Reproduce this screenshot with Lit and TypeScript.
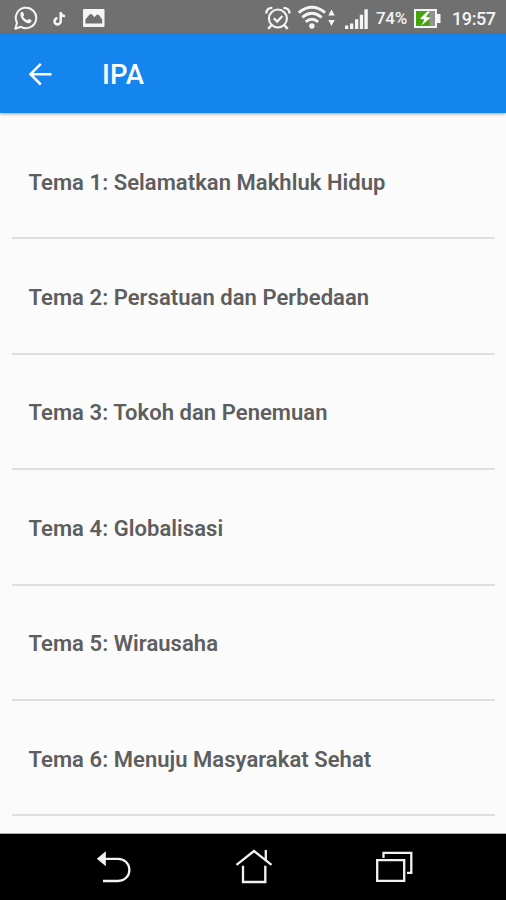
import { LitElement, html, css } from "lit";
import { customElement, property } from "lit/decorators.js";

@customElement("status-bar")
class StatusBar extends LitElement {
  static styles = css`
    :host { display: flex; align-items: flex-start; height: 34px; background: #707070; color: #f5f5f5; padding: 0 10px 0 14px; box-sizing: border-box; flex: none; }
    svg { display: block; flex: none; height: 34px; }
    .left { display: flex; flex: 1; }
    .right { display: flex; align-items: flex-start; }
    .pct { width: 37px; margin-left: 7px; font-size: 17px; font-weight: 500; line-height: 37px; height: 34px; white-space: nowrap; letter-spacing: -0.3px; }
    .time { width: 44px; margin-left: 11px; font-size: 18px; font-weight: 500; line-height: 37px; height: 34px; letter-spacing: -0.4px; white-space: nowrap; }
  `;
  render() {
    return html`
      <div class="left">
        <svg width="92" height="34" viewBox="14 0 92 34">
          <path d="M15.3 28.7 L17 22.7 A10.2 10.2 0 1 1 21 26.8 Z" fill="none" stroke="#f5f5f5" stroke-width="2" stroke-linejoin="round"/>
          <path d="M20.6 12.8c.8-1.2 2.1-1.3 2.6-.2l.9 2.2c.2.6-.8 1.2-1 1.7.9 1.9 2.3 3 4.1 3.7.6-.2 1.1-1.5 1.8-1.2l2.3 1.1c.8.5-.1 2.2-1.2 2.8-3.9 1.7-10.9-4.6-9.5-10.1z" fill="#f5f5f5"/>
          <path d="M60.7 12v9.3a3.1 3.1 0 1 1-3.2-3.1M60.7 13c.4 2 2.1 3.1 4.4 3.2" fill="none" stroke="#f5f5f5" stroke-width="2.5"/>
          <path fill-rule="evenodd" fill="#f5f5f5" d="M84 9h19.5q1 0 1 1v16q0 1-1 1H84q-1 0-1-1V10q0-1 1-1z M85.4 23.4h16.8v-4l-3.2-4.4q-1.3-1.2-2.6 0l-2 2.3-2.2-2.7q-1.3-1.2-2.6 0l-4.2 4.8z"/>
        </svg>
      </div>
      <div class="right">
        <svg width="104" height="34" viewBox="265 0 104 34">
          <g fill="none" stroke="#f5f5f5" stroke-width="2.1">
            <circle cx="277.9" cy="18.5" r="9"/>
            <path d="M273.8 18.3l3.4 3.3 5.2-5.7" stroke-width="2.2"/>
            <path d="M266.4 13.5q-.2-5.6 6-5.6M289.4 13.5q.2-5.6-6-5.6" stroke-width="2.3"/>
            <path d="M271.2 25.5l-3 3.4M284.6 25.5l3 3.4" stroke-width="2.5"/>
          </g>
          <g fill="none" stroke="#f5f5f5" stroke-width="2.8">
            <path d="M298.7 12.6q13.2-10.8 26.4 0M302.2 17.3q9.7-8 19.4 0M305.7 21.8q6.2-5 12.4 0"/>
          </g>
          <circle cx="311.9" cy="26" r="2.7" fill="#f5f5f5"/>
          <path d="M328.3 15.5l3.2-6 3.2 6zM328.3 20l3.2 6 3.2-6z" fill="#f5f5f5"/>
          <path d="M345 25.5h3.3V29H345zM350 23.5h3.3V29H350zM355 19.3h3.3V29H355zM359.8 14.7h3.3V29h-3.3zM364.4 9.3h3.4V29h-3.4z" fill="#f5f5f5"/>
        </svg>
        <span class="pct">74%</span>
        <svg width="28" height="34" viewBox="413 0 28 34">
          <path d="M414 9h23v5h3.5v9H437v5h-23z" fill="#f5f5f5"/>
          <path d="M416 11h19v15h-19z" fill="#929292"/>
          <path d="M416 11h13.5v15H416z" fill="#43a50a"/>
          <path d="M427.2 11.5l-7.2 7.2 4.4.8-3 6 9.2-7.7-4.6-1 4-5.3z" fill="#fff"/>
        </svg>
        <span class="time">19:57</span>
      </div>`;
  }
}

@customElement("title-bar")
class TitleBar extends LitElement {
  @property() heading = "";
  static styles = css`
    :host { display: flex; align-items: center; height: 79px; background: #1484ef; color: #fff; flex: none; box-sizing: border-box; padding-left: 27px; box-shadow: 0 1px 3px rgba(0,0,0,.35); z-index: 1; }
    svg { display: block; margin-right: 49px; }
    h1 { margin: 0; padding-top: 3px; font-size: 27.5px; font-weight: 500; line-height: 32px; letter-spacing: 0.2px; }
  `;
  render() {
    return html`
      <svg width="26" height="26" viewBox="27 61 26 26" fill="none" stroke="#fff" stroke-width="2.5">
        <path d="M51.5 74.2H30.5M40.8 63.9L30.5 74.2l10.3 10.3"/>
      </svg>
      <h1>${this.heading}</h1>`;
  }
}

@customElement("nav-bar")
class NavBar extends LitElement {
  static styles = css`
    :host { display: flex; align-items: center; justify-content: space-between; height: 66px; background: #000; flex: none; padding: 0 93px 0 96px; box-sizing: border-box; }
    svg { display: block; fill: none; stroke: #f2f2f2; stroke-width: 2.3; }
    .solid { fill: #f2f2f2; stroke: none; }
  `;
  render() {
    return html`
      <svg width="36" height="40" viewBox="96 847 36 40">
        <path d="M104 858.8h14.3a11 11 0 0 1 0 22.2H103"/>
        <path class="solid" d="M96.8 858.8l9-7.5v15z"/>
      </svg>
      <svg width="38" height="40" viewBox="235 847 38 40">
        <path d="M236.5 864.8L254 851l17.5 13.8M265.8 850v10M243 865.7V882h22.3v-16.3"/>
      </svg>
      <svg width="38" height="40" viewBox="375 847 38 40">
        <path d="M377.2 860.2h27v20.6h-27zM383.5 858v-5.2h27.8v20.1H407"/>
      </svg>`;
  }
}

const themes = [
  "Selamatkan Makhluk Hidup",
  "Persatuan dan Perbedaan",
  "Tokoh dan Penemuan",
  "Globalisasi",
  "Wirausaha",
  "Menuju Masyarakat Sehat",
];

@customElement("app-root")
class AppRoot extends LitElement {
  static styles = css`
    :host { display: flex; flex-direction: column; height: 900px; width: 506px; overflow: hidden; background: #fbfbfb; font-family: Roboto, "Liberation Sans", sans-serif; }
    main { flex: 1; min-height: 0; padding: 11px 11px 0 12px; border-bottom: 1px solid #a8a8a8; overflow: hidden; }
    .row { display: flex; align-items: center; height: 115.4px; box-sizing: border-box; border-bottom: 2px solid #dfdfdf; padding: 3px 17px 0 16.5px; color: #5e5e5e; font-size: 22px; font-weight: 600; letter-spacing: 0.05px; white-space: nowrap; }
  `;
  render() {
    return html`
      <status-bar></status-bar>
      <title-bar heading="IPA"></title-bar>
      <main>${themes.map((t, i) => html`<div class="row">Tema ${i + 1}: ${t}</div>`)}</main>
      <nav-bar></nav-bar>`;
  }
}
